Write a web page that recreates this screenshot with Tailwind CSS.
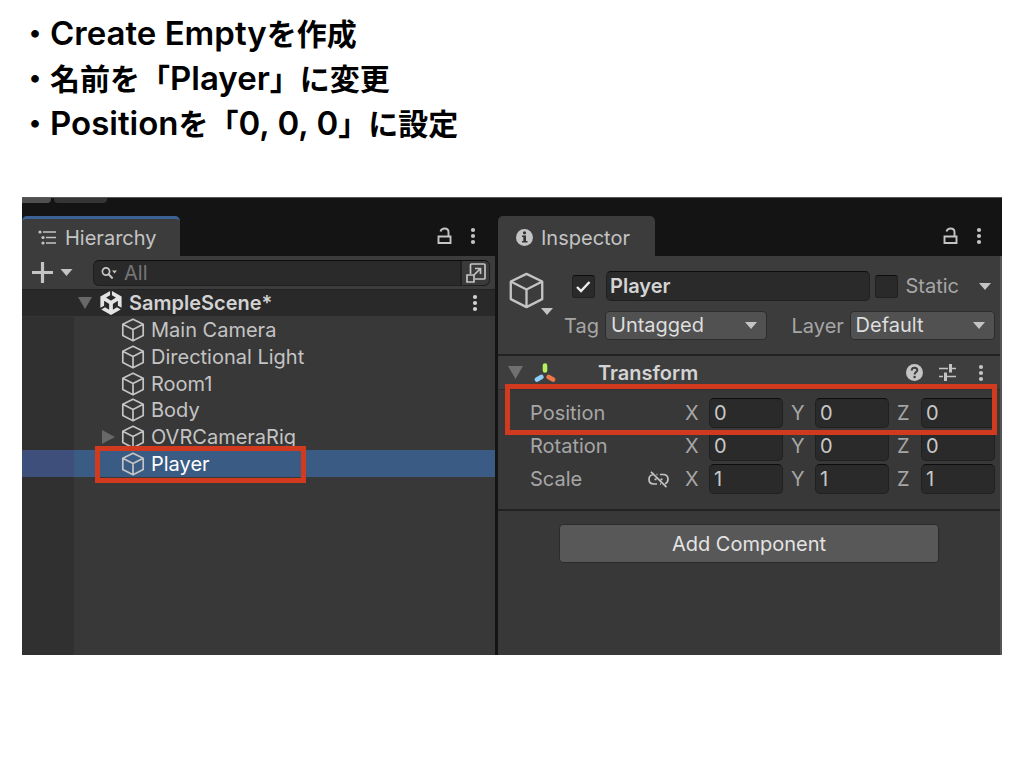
<!DOCTYPE html>
<html lang="ja">
<head>
<meta charset="utf-8">
<meta name="viewport" content="width=device-width, initial-scale=1">
<title>Create Empty</title>
<script src="https://cdn.jsdelivr.net/npm/@tailwindcss/browser@4"></script>
</head>
<body class="bg-white font-['Inter','Noto_Sans_CJK_JP',sans-serif]">
<svg class="hidden" aria-hidden="true">
  <symbol id="cube" viewBox="0 0 24 24"><path d="M12 1.2 22.2 6.2V17.6L12 22.8 1.8 17.6V6.2ZM1.8 6.2 12 11.4 22.2 6.2M12 11.4V22.8" fill="none" stroke="currentColor" stroke-linejoin="round"/></symbol>
  <symbol id="down" viewBox="0 0 12 7"><path d="M0 0H12L6 7Z" fill="currentColor"/></symbol>
  <symbol id="dots" viewBox="0 0 6 18"><circle cx="3" cy="3" r="2.1"/><circle cx="3" cy="9" r="2.1"/><circle cx="3" cy="15" r="2.1"/></symbol>
  <symbol id="lock" viewBox="0 0 14 18"><path d="M1 9.5H13V16H1ZM3 4.500C3.600 2.500 5 1.500 7.200 1.500 9.700 1.500 11 3 11 5.200V9.500" fill="none" stroke="currentColor" stroke-width="1.900"/></symbol>
</svg>
<main class="px-[22px] pt-[11px] pb-8">
  <ul class="-ml-0.5 h-[186px] text-[30px] leading-[45px] font-semibold text-black">
    <li class="h-[45px]">・<span class="text-[33px]">Create Empty</span>を作成</li>
    <li class="h-[45px]">・名前を「<span class="text-[33px]">Player</span>」に変更</li>
    <li class="h-[45px]">・<span class="text-[33px]">Position</span>を「<span class="text-[33px]">0, 0, 0</span>」に設定</li>
  </ul>

  <div class="bg-[#141414] border-t border-[#5a5a5a] text-[20px] leading-6 text-[#c4c4c4]">
    <div class="flex h-[18px] items-start gap-[3px]">
      <div class="h-[5px] w-[29px] rounded-br bg-[#505050]"></div>
      <div class="h-[5px] w-[53px] rounded-b bg-[#353535]"></div>
    </div>
    <div class="flex min-h-[439px] gap-[3px]">

      <!-- Hierarchy -->
      <section class="flex min-w-0 flex-[473] flex-col" aria-label="Hierarchy">
        <header class="flex h-10 items-center pr-[19px]">
          <h2 class="flex h-full w-[158px] items-center gap-2 rounded-t-[5px] border-t-[3px] border-[#3a6294] bg-[#3c3c3c] pl-4 font-normal">
            <svg class="h-[15px] w-[19px]" viewBox="0 0 19 15" fill="currentColor"><circle cx="2" cy="2" r="1.600"/><circle cx="5" cy="7.500" r="1.600"/><circle cx="5" cy="13" r="1.600"/><path d="M5 1.200H18V2.800H5ZM8 6.700H18V8.300H8ZM8 12.200H18V13.800H8Z"/></svg>
            Hierarchy
          </h2>
          <button class="mr-[18px] ml-auto" aria-label="Lock"><svg class="h-[18px] w-[15px]"><use href="#lock"/></svg></button>
          <button aria-label="Menu"><svg class="h-[18px] w-1.5 fill-current"><use href="#dots"/></svg></button>
        </header>
        <div class="flex h-[34px] items-center border-b border-[#222] bg-[#3c3c3c] pr-[5px] pl-2.5">
          <button class="mr-5 flex items-center gap-[7px]" aria-label="Add">
            <svg class="size-[21px]" viewBox="0 0 21 21"><path d="M10.500 0V21M0 10.500H21" stroke="currentColor" stroke-width="3.200"/></svg>
            <svg class="h-[7px] w-[13px]"><use href="#down"/></svg>
          </button>
          <div class="flex h-[26px] min-w-0 flex-1 overflow-hidden rounded-[6px] border border-[#1f1f1f] border-t-[#0d0d0d] bg-[#2a2a2a]">
            <label for="search" class="flex items-center pl-[7px]"><svg class="h-3 w-[17px]" viewBox="0 0 17 12"><circle cx="5" cy="4.500" r="3.600" fill="none" stroke="currentColor" stroke-width="1.700"/><path d="M7.600 7.200 11.600 11.500" stroke="currentColor" stroke-width="2"/><path d="M11 3.500H16L13.500 6.500Z" fill="currentColor"/></svg></label>
            <input id="search" placeholder="All" aria-label="Search" class="min-w-0 flex-1 bg-transparent pl-1.5 placeholder-[#757575] outline-none">
            <button class="flex w-[29px] items-center justify-center border-l-2 border-[#202020] bg-[#3a3a3a]" aria-label="Open search">
              <svg class="size-5" viewBox="0 0 20 20" fill="none" stroke="currentColor" stroke-width="1.700"><path d="M4.500 11V2Q4.500 1 5.500 1H18Q19 1 19 2V15Q19 16 18 16H9"/><path d="M1 12H8V19H1ZM8 12 14.500 5.500M9 5.500H14.500V11"/></svg>
            </button>
          </div>
        </div>
        <div class="flex flex-1 flex-col bg-[linear-gradient(90deg,#303030_52px,#383838_52px)]">
          <div class="flex h-[27px] items-center border-b border-[#363636] bg-[#292929] pr-[17px] pl-14 font-semibold text-[#d2d2d2]">
            <svg class="mr-[7px] h-3 w-3.5 text-[#686868]" viewBox="0 0 12 7" preserveAspectRatio="none"><path d="M0 0H12L6 7Z" fill="currentColor"/></svg>
            <svg class="mr-1.5 size-6 fill-[#e4e4e4]" viewBox="0 0 24 24"><path d="m12.9288 4.2939 3.7997 2.1929c.1366.077.1415.2905 0 .3675l-4.515 2.6076a.4192.4192 0 0 1-.4246 0L7.274 6.8543c-.139-.0745-.1415-.293 0-.3675l3.7972-2.193V0L1.3758 5.5977V16.793l3.7177-2.1456v-4.3858c-.0025-.1565.1813-.2682.318-.1838l4.5148 2.6076a.4252.4252 0 0 1 .2136.3676v5.2127c.0025.1565-.1813.2682-.3179.1838l-3.7996-2.1929-3.7178 2.1457L12 24l9.6954-5.5977-3.7178-2.1457-3.7996 2.1929c-.1341.082-.3229-.0248-.3179-.1838V13.053c0-.1565.087-.2956.2136-.3676l4.5149-2.6076c.134-.082.3228.0224.3179.1838v4.3858l3.7177 2.1456V5.5977L12.9288 0Z"/></svg>
            SampleScene*
            <button class="ml-auto" aria-label="Scene menu"><svg class="h-[18px] w-1.5 fill-current"><use href="#dots"/></svg></button>
          </div>
          <ul class="grid h-[160px] grid-rows-6">
            <li class="flex items-center gap-1.5 pl-[99px]"><svg class="size-6 stroke-[1.700px]"><use href="#cube"/></svg>Main Camera</li>
            <li class="flex items-center gap-1.5 pl-[99px]"><svg class="size-6 stroke-[1.700px]"><use href="#cube"/></svg>Directional Light</li>
            <li class="flex items-center gap-1.5 pl-[99px]"><svg class="size-6 stroke-[1.700px]"><use href="#cube"/></svg>Room1</li>
            <li class="flex items-center gap-1.5 pl-[99px]"><svg class="size-6 stroke-[1.700px]"><use href="#cube"/></svg>Body</li>
            <li class="flex items-center gap-1.5 pl-20"><svg class="-mr-px h-3.5 w-3.5 text-[#686868]" viewBox="0 0 14 14"><path d="M0 0 13 7 0 14Z" fill="currentColor"/></svg><svg class="size-6 stroke-[1.700px]"><use href="#cube"/></svg>OVRCameraRig</li>
            <li class="relative flex items-center gap-1.5 bg-[linear-gradient(90deg,#3d4f7a_52px,#3a5c84_52px)] pl-[99px] text-white"><svg class="size-6 stroke-[1.700px] text-[#c4c4c4]"><use href="#cube"/></svg>Player
              <span class="absolute -top-1 left-[73px] h-[37px] w-[211px] border-[5px] border-[#d23a20]"></span></li>
          </ul>
        </div>
      </section>

      <!-- Inspector -->
      <section class="flex min-w-0 flex-[504] flex-col" aria-label="Inspector">
        <header class="flex h-10 items-center pr-5">
          <h2 class="flex h-full w-[157px] items-center gap-2 rounded-t-[5px] bg-[#3c3c3c] pt-[3px] pl-[18px] font-normal">
            <svg class="size-[17px]" viewBox="0 0 17 17"><circle cx="8.500" cy="8.500" r="8.500" fill="currentColor"/><circle cx="8.500" cy="3.800" r="1.600" fill="#333"/><path d="M6 6.500H10V12H11.500V13.500H6V12H7.300V8H6Z" fill="#333"/></svg>
            Inspector
          </h2>
          <button class="mr-[18px] ml-auto" aria-label="Lock"><svg class="h-[18px] w-[15px]"><use href="#lock"/></svg></button>
          <button aria-label="Menu"><svg class="h-[18px] w-1.5 fill-current"><use href="#dots"/></svg></button>
        </header>
        <div class="flex-1 border-r-2 border-[#555] bg-[#383838]">
          <div class="flex h-[100px] border-b-2 border-[#222] bg-[#3c3c3c] pt-[15px] pr-[5px] pl-2.5">
            <button class="relative mr-[11px] flex h-[46px] w-[45px] items-end" aria-label="Icon">
              <svg class="mb-2 size-[37px] stroke-[1.500px]"><use href="#cube"/></svg>
              <svg class="absolute right-0 bottom-0.5 h-[7px] w-3"><use href="#down"/></svg>
            </button>
            <div class="flex min-w-0 flex-1 flex-col gap-2.5">
              <div class="flex h-[30px] items-center pl-2">
                <span class="relative mr-[11px] size-[23px]">
                  <input type="checkbox" checked aria-label="Active" class="peer block size-full appearance-none rounded-[3px] border border-[#202020] border-t-[#0d0d0d] bg-[#2a2a2a]">
                  <svg class="pointer-events-none absolute inset-0 hidden peer-checked:block" viewBox="0 0 23 23"><path d="M5 12 9 16 17.500 7" fill="none" stroke="#eee" stroke-width="2.400"/></svg>
                </span>
                <input value="Player" aria-label="Name" class="mr-[5px] h-[30px] min-w-0 flex-1 rounded-[5px] border border-[#202020] border-t-[#0d0d0d] bg-[#2a2a2a] pl-[3px] font-semibold text-[#d4d4d4]">
                <input id="static" type="checkbox" class="mr-[7px] size-[23px] appearance-none rounded-[3px] border border-[#202020] border-t-[#0d0d0d] bg-[#2a2a2a]">
                <label for="static" class="text-[#a6a6a6]">Static</label>
                <button class="mr-1 ml-5" aria-label="Static options"><svg class="h-[7px] w-3"><use href="#down"/></svg></button>
              </div>
              <div class="flex h-[29px] items-center">
                <label for="tag" class="w-[41px] text-[#a6a6a6]">Tag</label>
                <span class="relative mr-[25px] h-full flex-[161]">
                  <select id="tag" class="h-full w-full appearance-none rounded-[4px] border border-[#2c2c2c] bg-[#515151] pb-0.5 pl-[5px] text-[#dedede]"><option>Untagged</option></select>
                  <svg class="pointer-events-none absolute top-[11px] right-2.5 h-[7px] w-3"><use href="#down"/></svg>
                </span>
                <label for="layer" class="w-[58px] text-[#a6a6a6]">Layer</label>
                <span class="relative h-full flex-[145]">
                  <select id="layer" class="h-full w-full appearance-none rounded-[4px] border border-[#2c2c2c] bg-[#515151] pb-0.5 pl-[5px] text-[#dedede]"><option>Default</option></select>
                  <svg class="pointer-events-none absolute top-[11px] right-2.5 h-[7px] w-3"><use href="#down"/></svg>
                </span>
              </div>
            </div>
          </div>
          <div class="flex h-[34px] items-center border-b border-[#303030] bg-[#3e3e3e] pr-4 pl-2.5">
            <svg class="mr-[11px] h-[13px] w-[15px] text-[#707070]" viewBox="0 0 12 7" preserveAspectRatio="none"><path d="M0 0H12L6 7Z" fill="currentColor"/></svg>
            <svg class="mr-[42px] h-5 w-[22px]" viewBox="0 0 22 20" stroke-linecap="round" stroke-width="4.600"><path d="M11 2.500V7.500" stroke="#b6f05e"/><path d="M7.300 14 3 16.500" stroke="#8fd0f8"/><path d="M14.700 14 19 16.500" stroke="#f07848"/></svg>
            <h3 class="font-semibold text-[#d4d4d4]">Transform</h3>
            <button class="mr-4 ml-auto" aria-label="Help"><svg class="size-[17px]" viewBox="0 0 17 17"><circle cx="8.500" cy="8.500" r="8.500" fill="currentColor"/><path d="M5.700 6.500C5.700 4.700 6.900 3.700 8.500 3.700 10.200 3.700 11.300 4.700 11.300 6.200 11.300 8 8.600 8.200 8.600 10.500" fill="none" stroke="#3e3e3e" stroke-width="2"/><circle cx="8.600" cy="13" r="1.300" fill="#3e3e3e"/></svg></button>
            <button class="mr-[22px]" aria-label="Presets"><svg class="h-[17px] w-[17px]" viewBox="0 0 17 17" stroke="currentColor" fill="none"><path d="M0 4.500H9M13 4.500H17M0 12.500H4M8 12.500H17" stroke-width="1.600"/><path d="M11.500 0V8.500M6.500 8.500V17" stroke-width="3"/></svg></button>
            <button aria-label="Transform menu"><svg class="h-[18px] w-1.5 fill-current"><use href="#dots"/></svg></button>
          </div>
          <div class="flex flex-col gap-[3px] border-b-2 border-[#222] pt-2 pb-[15px] text-[#a6a6a6]">
            <div class="relative flex h-[30px] items-center gap-2 pr-[5px] pl-8">
              <span class="w-[147px]">Position</span>
              <label class="flex min-w-0 flex-1"><span class="w-6 shrink-0 self-center">X</span><input value="0" class="h-[30px] min-w-0 flex-1 rounded-[5px] border border-[#202020] border-t-[#0d0d0d] bg-[#2a2a2a] pl-1 text-[#c8c8c8]"></label>
              <label class="flex min-w-0 flex-1"><span class="w-6 shrink-0 self-center">Y</span><input value="0" class="h-[30px] min-w-0 flex-1 rounded-[5px] border border-[#202020] border-t-[#0d0d0d] bg-[#2a2a2a] pl-1 text-[#c8c8c8]"></label>
              <label class="flex min-w-0 flex-1"><span class="w-6 shrink-0 self-center">Z</span><input value="0" class="h-[30px] min-w-0 flex-1 rounded-[5px] border border-[#202020] border-t-[#0d0d0d] bg-[#2a2a2a] pl-1 text-[#c8c8c8]"></label>
              <span class="pointer-events-none absolute -top-3.5 right-[3px] -bottom-[7px] left-[7px] border-[5px] border-[#d23a20]"></span>
            </div>
            <div class="flex h-[30px] items-center gap-2 pr-[5px] pl-8">
              <span class="w-[147px]">Rotation</span>
              <label class="flex min-w-0 flex-1"><span class="w-6 shrink-0 self-center">X</span><input value="0" class="h-[30px] min-w-0 flex-1 rounded-[5px] border border-[#202020] border-t-[#0d0d0d] bg-[#2a2a2a] pl-1 text-[#c8c8c8]"></label>
              <label class="flex min-w-0 flex-1"><span class="w-6 shrink-0 self-center">Y</span><input value="0" class="h-[30px] min-w-0 flex-1 rounded-[5px] border border-[#202020] border-t-[#0d0d0d] bg-[#2a2a2a] pl-1 text-[#c8c8c8]"></label>
              <label class="flex min-w-0 flex-1"><span class="w-6 shrink-0 self-center">Z</span><input value="0" class="h-[30px] min-w-0 flex-1 rounded-[5px] border border-[#202020] border-t-[#0d0d0d] bg-[#2a2a2a] pl-1 text-[#c8c8c8]"></label>
            </div>
            <div class="flex h-[30px] items-center gap-2 pr-[5px] pl-8">
              <span class="flex w-[147px] items-center justify-between pr-2">Scale
                <button aria-label="Constrain proportions"><svg class="h-[17px] w-[21px] text-[#c4c4c4]" viewBox="0 0 21 17" fill="none" stroke="currentColor" stroke-width="1.700"><path d="M5 3.500C2.500 4 1 5.800 1 8.300 1 11.200 3 13 5.800 13H9M8.500 3.500H9.500M12 3.500H15C18 3.500 20 5.500 20 8.300 20 10.500 19 12 17 12.800M12 13H13M6.500 8.300H8.500M12.500 8.300H14.500M3 .800 18.500 16.200"/></svg></button></span>
              <label class="flex min-w-0 flex-1"><span class="w-6 shrink-0 self-center">X</span><input value="1" class="h-[30px] min-w-0 flex-1 rounded-[5px] border border-[#202020] border-t-[#0d0d0d] bg-[#2a2a2a] pl-1 text-[#c8c8c8]"></label>
              <label class="flex min-w-0 flex-1"><span class="w-6 shrink-0 self-center">Y</span><input value="1" class="h-[30px] min-w-0 flex-1 rounded-[5px] border border-[#202020] border-t-[#0d0d0d] bg-[#2a2a2a] pl-1 text-[#c8c8c8]"></label>
              <label class="flex min-w-0 flex-1"><span class="w-6 shrink-0 self-center">Z</span><input value="1" class="h-[30px] min-w-0 flex-1 rounded-[5px] border border-[#202020] border-t-[#0d0d0d] bg-[#2a2a2a] pl-1 text-[#c8c8c8]"></label>
            </div>
          </div>
          <button class="mx-auto mt-[13px] block h-[39px] w-[380px] max-w-full rounded-[4px] border border-[#2b2b2b] bg-[#585858] text-[#e4e4e4]">Add Component</button>
        </div>
      </section>
    </div>
  </div>
</main>
</body>
</html>
